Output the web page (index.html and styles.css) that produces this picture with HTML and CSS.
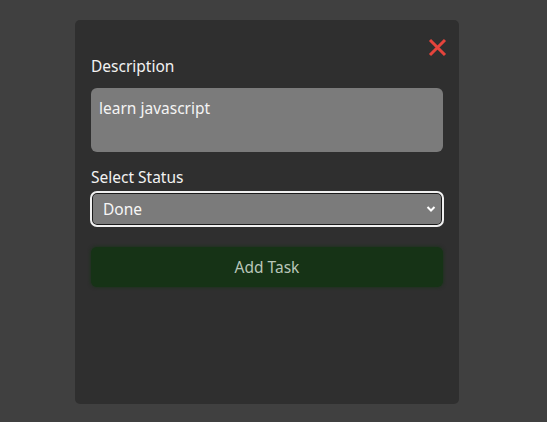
FILE: index.html
```html
<!DOCTYPE html>
<html>
<head>
<meta charset="utf-8">
<link rel="stylesheet" href="styles.css">
</head>
<body>
<div class="modal">
  <div class="close-row">
    <svg class="close" width="19" height="19" viewBox="0 0 19 19"><path d="M2 2L17 17M17 2L2 17" stroke="#e5443c" stroke-width="3" stroke-linecap="butt"/></svg>
  </div>
  <form class="form">
    <label class="label">Description</label>
    <div class="textarea">learn javascript</div>
    <label class="label label-status">Select Status</label>
    <div class="select">
      <span>Done</span>
      <svg width="10" height="8" viewBox="0 0 10 8"><path d="M1.5 2L5 5.5L8.5 2" stroke="#fff" stroke-width="2" fill="none"/></svg>
    </div>
    <div class="button">Add Task</div>
  </form>
</div>
</body>
</html>
```
FILE: styles.css
```css
html, body { margin: 0; padding: 0; }
body {
  background: #404040;
  font-family: "Noto Sans", "Open Sans", sans-serif;
  color: #f2f2f2;
  height: 422px;
  padding-top: 20px;
  box-sizing: border-box;
}
.modal {
  margin-left: 75px;
  width: 384px;
  height: 384px;
  background: #2f2f2f;
  border-radius: 5px;
  box-sizing: border-box;
  padding: 15px 16px 0 16px;
}
.close-row {
  display: flex;
  justify-content: flex-end;
  height: 22px;
}
.close { margin-top: 3px; margin-right: -4px; }
.form { display: flex; flex-direction: column; }
.label {
  font-size: 15.5px;
  line-height: 20px;
  height: 20px;
  margin-top: -1px;
}
.textarea {
  margin-top: 12px;
  height: 64px;
  background: #7b7b7b;
  border-radius: 6px;
  box-sizing: border-box;
  padding: 10px 8px 8px 8px;
  font-size: 15.5px;
  line-height: 20px;
  color: #f4f4f4;
}
.label-status { margin-top: 15px; }
.select {
  margin: 4px -1px 0 -1px;
  height: 36px;
  box-sizing: border-box;
  border: 2px solid #f0f0f0;
  border-radius: 7px;
  box-shadow: inset 0 0 0 1px #1a1a1a;
  background: #7b7b7b;
  display: flex;
  align-items: center;
  justify-content: space-between;
  padding: 0 6px 1px 11px;
  font-size: 15.5px;
  color: #f6f6f6;
}
.button {
  margin-top: 20px;
  height: 40px;
  background: #163316;
  border-radius: 6px;
  box-shadow: 0 0 3px 1px rgba(22,51,22,0.6);
  display: flex;
  align-items: center;
  justify-content: center;
  font-size: 15.5px;
  color: #b9c6b9;
}
```
